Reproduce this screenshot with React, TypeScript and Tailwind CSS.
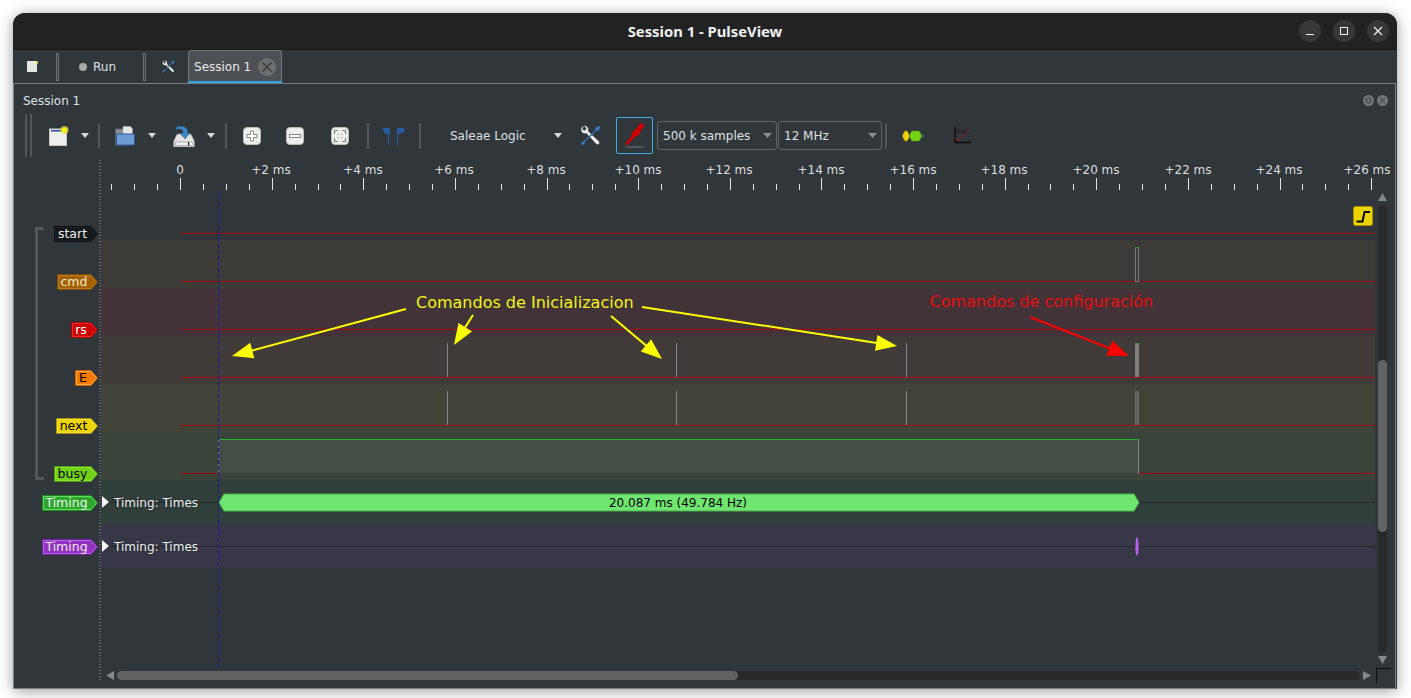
import { FC } from "react";

const TICK_X0 = 180.1;
const TICK_STEP = 22.905;

const ticks = Array.from({ length: 56 }, (_, i) => i - 3);

const rulerLabels = [
  { t: "0", x: 180 },
  { t: "+2 ms", x: 271 },
  { t: "+4 ms", x: 363 },
  { t: "+6 ms", x: 454 },
  { t: "+8 ms", x: 546 },
  { t: "+10 ms", x: 638 },
  { t: "+12 ms", x: 729 },
  { t: "+14 ms", x: 821 },
  { t: "+16 ms", x: 913 },
  { t: "+18 ms", x: 1004 },
  { t: "+20 ms", x: 1096 },
  { t: "+22 ms", x: 1188 },
  { t: "+24 ms", x: 1279 },
  { t: "+26 ms", x: 1367 },
];

type TagProps = {
  label: string;
  width: number;
  boxClass: string;
  fill: string;
  outer: string;
  inner: string;
  textClass: string;
};

const Tag: FC<TagProps> = ({ label, width, boxClass, fill, outer, inner, textClass }) => {
  const h = 16;
  const shape = (o: number) =>
    `${o},${o} ${width - 7},${o} ${width - o},${h / 2} ${width - 7},${h - o} ${o},${h - o}`;
  return (
    <div className={`relative h-[16px] flex items-center justify-center pr-[7px] pt-[1px] text-[12.5px] leading-none ${boxClass} ${textClass}`}>
      <svg className="absolute left-0 top-0" width={width} height={h}>
        <polygon points={shape(0.5)} fill={fill} stroke={outer} />
        <polygon points={shape(1.5)} fill={fill} stroke={inner} />
      </svg>
      <span className="relative">{label}</span>
    </div>
  );
};

const DropArrow = ({ className }: { className: string }) => (
  <svg className={className} width="8" height="5">
    <polygon points="0,0 8,0 4,5" fill="#d5d7d8" />
  </svg>
);

const Sep = ({ className }: { className: string }) => (
  <div className={`w-[2px] h-[26px] bg-[#54575a] rounded-sm ${className}`} />
);

const ToolsIcon = ({ size, className }: { size: number; className?: string }) => (
  <svg className={className} width={size} height={size} viewBox="0 0 20 20">
    <path d="M3 1 C0.8 2.8 0.6 5.2 2 7 C3.2 8.2 4.8 8.3 6 7.6 L15.6 18 C17 19.4 19.4 17 18 15.6 L7.6 6 C8.2 4.4 7.9 2.6 6.6 1.6 C5.8 0.9 4.8 0.6 4 0.7 L6.2 3.4 L4.6 5.4 L2.4 4.6 Z" fill="#f2f3f3" stroke="#8f959a" strokeWidth="0.4" />
    <path d="M17.5 0.8 L19.4 2.6 L17 5.6 L15.6 5.4 L5.2 15.8 L4.2 18.2 L1.8 19.4 L0.8 18.4 L2 16 L4.4 15 L14.8 4.6 L14.6 3.2 Z" fill="#3f7fc0" stroke="#1f4f86" strokeWidth="0.4" />
  </svg>
);

const ZoomBtn = ({ className, children }: { className: string; children: React.ReactNode }) => (
  <svg className={className} width="18" height="18" viewBox="0 0 18 18">
    <rect x="0.5" y="0.5" width="17" height="17" rx="3.5" fill="#eeeeec" stroke="#babdb6" />
    {children}
  </svg>
);

const Arrow = ({ x1, y1, x2, y2, color }: { x1: number; y1: number; x2: number; y2: number; color: string }) => {
  const len = Math.hypot(x2 - x1, y2 - y1);
  const ux = (x2 - x1) / len;
  const uy = (y2 - y1) / len;
  const bx = x2 - ux * 21;
  const by = y2 - uy * 21;
  const nx = -uy * 8;
  const ny = ux * 8;
  return (
    <g>
      <line x1={x1} y1={y1} x2={bx + ux * 4} y2={by + uy * 4} stroke={color} strokeWidth="2" />
      <polygon points={`${x2},${y2} ${bx + nx},${by + ny} ${bx - nx},${by - ny}`} fill={color} />
    </g>
  );
};

const Pulse = ({ x }: { x: number }) => (
  <g stroke="#85878a" strokeWidth="1">
    <line x1={x} y1="343" x2={x} y2="377" />
    <line x1={x} y1="391" x2={x} y2="425" />
  </g>
);

const Waveforms = () => (
  <svg className="absolute left-0 top-0" width="1361" height="477" viewBox="14 191 1361 477">
    {[233.5, 281.5, 329.5, 377.5, 425.5].map((y) => (
      <line key={y} x1="180" y1={y} x2="1375" y2={y} stroke="#a80808" strokeWidth="1" />
    ))}
    <line x1="180" y1="473.5" x2="218" y2="473.5" stroke="#a80808" />
    <line x1="1139" y1="473.5" x2="1375" y2="473.5" stroke="#a80808" />

    <Pulse x={447.5} />
    <Pulse x={676.5} />
    <Pulse x={906.5} />

    <rect x="1135.5" y="247.5" width="3" height="34" fill="#3c3b37" stroke="#77797a" />
    <line x1="1135" y1="247.5" x2="1139" y2="247.5" stroke="#1fa01f" />
    <rect x="1135" y="343" width="4" height="34" fill="#7e7f80" />
    <line x1="1135" y1="343.5" x2="1139" y2="343.5" stroke="#2fa02f" />
    <rect x="1135" y="391" width="4" height="34" fill="#6c6e6c" />
    <line x1="1137" y1="391" x2="1137" y2="425" stroke="#53554f" />

    <rect x="218" y="440" width="920" height="33" fill="#454e46" />
    <line x1="218" y1="439.5" x2="1139" y2="439.5" stroke="#22b022" />
    <line x1="1138.5" y1="440" x2="1138.5" y2="474" stroke="#85878a" />
    <line x1="218.5" y1="440" x2="218.5" y2="473" stroke="#77797a" />

    <line x1="108" y1="502.5" x2="1375" y2="502.5" stroke="#23272a" />
    <line x1="108" y1="546.5" x2="1375" y2="546.5" stroke="#23272a" />

    <polygon points="219,502.5 224,494 1134,494 1139,502.5 1134,511 224,511" fill="#6fe66f" stroke="#4fb04f" strokeWidth="1" />
    <text x="678" y="507" textAnchor="middle" fontSize="12" fill="#000">
      20.087 ms (49.784 Hz)
    </text>
    <ellipse cx="1137" cy="546.5" rx="1.6" ry="9.5" fill="#b264e6" />

    <line x1="218.5" y1="190" x2="218.5" y2="667" stroke="#1717a8" strokeWidth="1" strokeDasharray="4 2" />

    <rect x="1353.5" y="206.5" width="19" height="19" rx="2" fill="#edd400" stroke="#a89000" />
    <path d="M1356.5 221.5 H1362.5 L1364.5 212 H1370" fill="none" stroke="#000" strokeWidth="2" />

    <text x="416" y="308" fontSize="16" fill="#f5f516">
      Comandos de Inicializacion
    </text>
    <text x="929.5" y="307" fontSize="16" fill="#ee0b0b">
      Comandos de configuración
    </text>
    <Arrow x1={406} y1={309} x2={232} y2={356} color="#ffff00" />
    <Arrow x1={473} y1={315} x2={454} y2={345} color="#ffff00" />
    <Arrow x1={611} y1={316} x2={662} y2={359} color="#ffff00" />
    <Arrow x1={642} y1={307} x2={897} y2={346} color="#ffff00" />
    <Arrow x1={1030} y1={317} x2={1129} y2={356} color="#ff0000" />
  </svg>
);

const TimingName = () => (
  <>
    <svg className="relative z-10 ml-[1px] shrink-0" width="7" height="12">
      <polygon points="0,0 7,6 0,12" fill="#f4f4f4" />
    </svg>
    <span className="relative z-10 ml-[5px] mt-[1px] text-[12px] text-[#eff0f1] [text-shadow:0_0_2px_#23272a]">Timing: Times</span>
  </>
);

export default function App() {
  return (
    <div className="h-[698px] w-full overflow-hidden bg-white pl-[13px] pt-[13px] font-['DejaVu_Sans',sans-serif]">
      <div className="flex h-[676px] w-[1384px] flex-col overflow-hidden rounded-t-[12px] bg-[#31363b] shadow-[0_2px_14px_rgba(0,0,0,0.4)]">
        {/* title bar */}
        <div className="flex h-[37px] shrink-0 items-center border-b border-[#191919] bg-[#222222]">
          <div className="flex-1 pl-[98px] text-center font-['Noto_Sans',sans-serif] text-[14.8px] font-bold text-[#f0f0f0]">
            Session 1 - PulseView
          </div>
          <div className="flex gap-[12px] pr-[8px]">
            <button className="flex h-[22px] w-[22px] items-center justify-center rounded-full bg-[#373737]">
              <svg width="10" height="10">
                <line x1="1" y1="8.5" x2="9" y2="8.5" stroke="#f0f0f0" strokeWidth="1" />
              </svg>
            </button>
            <button className="flex h-[22px] w-[22px] items-center justify-center rounded-full bg-[#373737]">
              <svg width="10" height="10">
                <rect x="1.5" y="1.5" width="7" height="7" fill="none" stroke="#f0f0f0" strokeWidth="1" />
              </svg>
            </button>
            <button className="flex h-[22px] w-[22px] items-center justify-center rounded-full bg-[#373737]">
              <svg width="10" height="10">
                <path d="M1 1 L9 9 M9 1 L1 9" stroke="#f0f0f0" strokeWidth="1.2" />
              </svg>
            </button>
          </div>
        </div>

        {/* main toolbar + tab */}
        <div className="flex h-[33px] shrink-0 items-center text-[12px] text-[#dfe1e2]">
          <svg className="ml-[14px]" width="11" height="11">
            <rect width="10" height="11" fill="#e6e6e3" />
            <circle cx="9.5" cy="1.5" r="1.5" fill="#f3e97a" />
          </svg>
          <div className="ml-[18px] h-[28px] w-[3px] border border-[#6e7173] bg-[#3a3f43]" />
          <div className="ml-[20px] h-[8px] w-[8px] rounded-full bg-[#a8aaa6]" />
          <span className="ml-[6px]">Run</span>
          <div className="ml-[27px] h-[28px] w-[3px] border border-[#6e7173] bg-[#3a3f43]" />
          <ToolsIcon size={13} className="ml-[16px]" />
          <div className="ml-[13px] flex h-[33px] w-[94px] items-center rounded-t-[3px] border border-b-0 border-[#73767a] bg-[#4d5054] pl-[5px]">
            <span className="text-[#e8e9ea]">Session 1</span>
            <svg className="ml-[7px]" width="18" height="18">
              <circle cx="9" cy="9" r="9" fill="#6d6d6d" />
              <path d="M4.5 4.5 L13.5 13.5 M13.5 4.5 L4.5 13.5" stroke="#34383b" strokeWidth="1.4" />
            </svg>
          </div>
        </div>

        {/* session panel */}
        <div className="relative mr-[1px] flex min-h-0 flex-1 flex-col border border-[#7c7f82]">
          <div className="absolute left-[174px] top-[-3px] h-[2px] w-[94px] bg-[#2f9fe0]" />
          <div className="flex h-[29px] shrink-0 items-center justify-between pl-[9px] pr-[7px] pt-[4px] text-[12px] text-[#dfe1e2]">
            <span>Session 1</span>
            <div className="flex gap-[3px]">
              <svg width="11" height="11">
                <circle cx="5.5" cy="5.5" r="5.5" fill="#72767a" />
                <circle cx="5.5" cy="5.5" r="2.5" fill="none" stroke="#33383b" />
              </svg>
              <svg width="11" height="11">
                <circle cx="5.5" cy="5.5" r="5.5" fill="#72767a" />
                <path d="M3 3 L8 8 M8 3 L3 8" stroke="#33383b" />
              </svg>
            </div>
          </div>

          {/* session toolbar */}
          <div className="mb-[2px] flex h-[45px] shrink-0 items-center text-[12px] text-[#dfe1e2]">
            <div className="ml-[11px] h-[43px] w-[2px] bg-[#54575a]" />
            <div className="ml-[3px] h-[43px] w-[2px] bg-[#54575a]" />
            <svg className="ml-[17px]" width="20" height="20" viewBox="0 0 20 20">
              <rect x="0.5" y="3" width="17" height="16.5" fill="#eeeeec" stroke="#c5c7c2" />
              <rect x="2" y="4" width="11" height="1.6" fill="#2a5a9f" />
              <circle cx="15.5" cy="4" r="4" fill="#e6e43a" opacity="0.75" />
              <circle cx="15.5" cy="4" r="2.2" fill="#fbf700" />
            </svg>
            <DropArrow className="ml-[12px]" />
            <Sep className="ml-[9px]" />
            <svg className="ml-[15px]" width="20" height="20" viewBox="0 0 20 20">
              <rect x="0.5" y="3" width="12" height="16" fill="#8a8e92" stroke="#5d6164" />
              <path d="M8 0.5 H15.5 L17.5 3 V8 H8 Z" fill="#e8e8e6" stroke="#aaa" strokeWidth="0.5" />
              <path d="M1.5 8 H19.5 V19 H1.5 Z" fill="#6d9bd2" stroke="#2a5a9f" />
            </svg>
            <DropArrow className="ml-[13px]" />
            <svg className="ml-[17px]" width="22" height="22" viewBox="0 0 22 22">
              <path d="M4 9 H18 L21.5 16 V22 H0.5 V16 Z" fill="#e4e5e2" stroke="#6a6d6a" strokeWidth="0.6" />
              <rect x="2.5" y="17" width="17" height="3.4" fill="#f3f3f1" stroke="#555" strokeWidth="0.4" />
              <rect x="15" y="17" width="1.2" height="3.4" fill="#111" />
              <path d="M3 2.5 C7.5 0 13.5 1 14.5 5.5 V8 H17 L12 14 L7 8 H10 V6.5 C10 4.5 7 3.5 3 4.5 Z" fill="#3f86c4" stroke="#24588f" strokeWidth="0.5" />
            </svg>
            <DropArrow className="ml-[12px]" />
            <Sep className="ml-[10px]" />
            <ZoomBtn className="ml-[16px]">
              <path d="M7.5 4 H10.5 V7.5 H14 V10.5 H10.5 V14 H7.5 V10.5 H4 V7.5 H7.5 Z" fill="#fff" stroke="#858585" />
            </ZoomBtn>
            <ZoomBtn className="ml-[25px]">
              <rect x="3.5" y="7.5" width="11" height="3" fill="#fff" stroke="#858585" />
            </ZoomBtn>
            <ZoomBtn className="ml-[27px]">
              <path d="M3.5 7 V3.5 H7 M11 3.5 H14.5 V7 M14.5 11 V14.5 H11 M7 14.5 H3.5 V11" fill="none" stroke="#858585" strokeWidth="1.2" />
              <path d="M7 7 H8 M10 7 H11 V8 M11 10 V11 H10 M8 11 H7 V10 M7 8 V7" fill="none" stroke="#a0a0a0" />
            </ZoomBtn>
            <Sep className="ml-[18px]" />
            <svg className="ml-[13px]" width="23" height="20" viewBox="0 0 23 20">
              <path d="M0 2 H8 V8 L7 9 V19 H6 V8 H3 Z" fill="#2a5a9f" />
              <path d="M15 19 V2 H22.5 V6 L17 8 H16 V19 Z" fill="#2a5a9f" />
            </svg>
            <Sep className="ml-[14px]" />
            <span className="ml-[29px] w-[104px]">Saleae Logic</span>
            <DropArrow className="" />
            <ToolsIcon size={21} className="ml-[18px]" />
            <button className="ml-[15px] flex h-[37px] w-[37px] items-center justify-center rounded-[2px] border border-[#3daee9] bg-[#31363b]">
              <svg width="22" height="26" viewBox="0 0 22 26">
                <ellipse cx="11" cy="24" rx="10" ry="1" fill="#55595c" />
                <path d="M1 21 L8 12.5 L7 10.5 L13 5 L15.5 1 L19 0.5 L20 3.5 L17.5 6.5 L14.5 12.5 L11.5 13.5 L2.5 22.5 Z" fill="#cc0000" />
              </svg>
            </button>
            <div className="ml-[4px] flex h-[29px] w-[120px] items-center justify-between rounded-[3px] border border-[#62666a] pl-[5px] pr-[4px]">
              <span>500 k samples</span>
              <svg width="9" height="5">
                <polygon points="0,0 9,0 4.5,5" fill="#8b8e90" />
              </svg>
            </div>
            <div className="ml-[1px] flex h-[29px] w-[104px] items-center justify-between rounded-[3px] border border-[#62666a] pl-[5px] pr-[4px]">
              <span>12 MHz</span>
              <svg width="9" height="5">
                <polygon points="0,0 9,0 4.5,5" fill="#8b8e90" />
              </svg>
            </div>
            <Sep className="ml-[3px]" />
            <svg className="ml-[15px]" width="22" height="12" viewBox="0 0 22 12">
              <line x1="0" y1="6" x2="22" y2="6" stroke="#9a9d90" />
              <polygon points="1,4.5 3,1 5,1 7,4.5 7,7.5 5,11 3,11 1,7.5" fill="#edd400" stroke="#c4a000" strokeWidth="0.5" />
              <polygon points="8,4 10,1 17,1 19,4 19,8 17,11 10,11 8,8" fill="#73d216" stroke="#4e9a06" strokeWidth="0.5" />
            </svg>
            <svg className="ml-[29px]" width="18" height="18" viewBox="0 0 18 18">
              <path d="M2 0 V15.5 H18" fill="none" stroke="#0a0a0a" strokeWidth="1.4" />
              <path d="M1 11 C5 14 6 14 9 10 C11 7 14 8 16 2" fill="none" stroke="#a01818" strokeWidth="1" />
              <text x="3.5" y="6" fontSize="6" fill="#111">f(x)</text>
            </svg>
          </div>

          {/* trace view */}
          <div className="relative flex min-h-0 flex-1 flex-col">
            <div className="absolute left-[85px] top-0 h-[522px] w-[2px] bg-[repeating-linear-gradient(to_bottom,#63676a_0_1px,transparent_1px_3px)]" />

            <svg className="shrink-0" width="1381" height="31" viewBox="14 160 1381 31">
              {ticks.map((i) => {
                const x = Math.round(TICK_X0 + i * TICK_STEP) + 0.5;
                const major = ((i % 4) + 4) % 4 === 0;
                return <line key={i} x1={x} y1={major ? 178 : 184} x2={x} y2="190" stroke="#e4e5e6" strokeWidth="1" />;
              })}
              {rulerLabels.map((l) => (
                <text key={l.t} x={l.x} y="174" textAnchor="middle" fontSize="12" fill="#dcdedf">
                  {l.t}
                </text>
              ))}
            </svg>

            <div className="flex h-[477px] shrink-0">
              <div className="relative w-[1361px] shrink-0">
                {/* channel rows */}
                <div className="flex h-[49px]">
                  <div className="flex w-[84px] shrink-0 items-end justify-end">
                    <div className="mb-[-2px]">
                      <Tag label="start" width={44} boxClass="w-[44px]" fill="#16191a" outer="#0c0e0f" inner="#1e2224" textClass="text-[#eeeeec]" />
                    </div>
                  </div>
                </div>
                <div className="flex h-[48px]">
                  <div className="flex w-[84px] shrink-0 items-end justify-end">
                    <div className="mb-[-2px]">
                      <Tag label="cmd" width={41} boxClass="w-[41px]" fill="#a66200" outer="#7f4a00" inner="#bd7c1e" textClass="text-[#f2e6d0]" />
                    </div>
                  </div>
                  <div className="ml-[3px] flex-1 bg-[#3c3b37]" />
                </div>
                <div className="flex h-[48px]">
                  <div className="flex w-[84px] shrink-0 items-end justify-end">
                    <div className="mb-[-2px]">
                      <Tag label="rs" width={27} boxClass="w-[27px]" fill="#cc0000" outer="#a40000" inner="#ef2929" textClass="text-[#ffffff]" />
                    </div>
                  </div>
                  <div className="ml-[3px] flex-1 bg-[#423339]" />
                </div>
                <div className="flex h-[48px]">
                  <div className="flex w-[84px] shrink-0 items-end justify-end">
                    <div className="mb-[-2px]">
                      <Tag label="E" width={23} boxClass="w-[23px]" fill="#f57900" outer="#ce5c00" inner="#fcaf3e" textClass="text-[#000000]" />
                    </div>
                  </div>
                  <div className="ml-[3px] flex-1 bg-[#403b38]" />
                </div>
                <div className="flex h-[48px]">
                  <div className="flex w-[84px] shrink-0 items-end justify-end">
                    <div className="mb-[-2px]">
                      <Tag label="next" width={42} boxClass="w-[42px]" fill="#edd400" outer="#a89000" inner="#f5e03c" textClass="text-[#000000]" />
                    </div>
                  </div>
                  <div className="ml-[3px] flex-1 bg-[#42443a]" />
                </div>
                <div className="flex h-[48px]">
                  <div className="flex w-[84px] shrink-0 items-end justify-end">
                    <div className="mb-[-2px]">
                      <Tag label="busy" width={44} boxClass="w-[44px]" fill="#73d216" outer="#4e9a06" inner="#8ae234" textClass="text-[#000000]" />
                    </div>
                  </div>
                  <div className="ml-[3px] flex-1 bg-[#3a443b]" />
                </div>
                <div className="flex h-[44px] items-center">
                  <div className="mt-[1px] flex w-[84px] shrink-0 justify-end">
                    <Tag label="Timing" width={56} boxClass="w-[56px]" fill="#2fa52f" outer="#1c8a1c" inner="#5fe05f" textClass="text-[#e8f5e8]" />
                  </div>
                  <div className="ml-[3px] flex h-full flex-1 items-center bg-[#313f3b]">
                    <TimingName />
                  </div>
                </div>
                <div className="flex h-[44px] items-center">
                  <div className="mt-[1px] flex w-[84px] shrink-0 justify-end">
                    <Tag label="Timing" width={56} boxClass="w-[56px]" fill="#8f33bf" outer="#6f1f9f" inner="#bb62ee" textClass="text-[#f0e6f5]" />
                  </div>
                  <div className="ml-[3px] flex h-full flex-1 items-center bg-[#373747]">
                    <TimingName />
                  </div>
                </div>

                <Waveforms />

                {/* channel group bracket */}
                <div className="absolute left-[21px] top-[36px] h-[253px] w-[9px] rounded-[2px] border-y-[3px] border-l-[3px] border-[#54575a]" />
              </div>

              {/* vertical scrollbar */}
              <div className="ml-[3px] flex w-[9px] flex-col items-center pt-[2px]">
                <svg className="shrink-0" width="9" height="8">
                  <polygon points="4.5,0 9,8 0,8" fill="#85888a" />
                </svg>
                <div className="mt-[4px] flex h-[448px] w-[9px] shrink-0 flex-col rounded-full bg-[#292929] pt-[155px]">
                  <div className="h-[172px] rounded-full bg-[#626262]" />
                </div>
                <svg className="mt-[3px] shrink-0" width="9" height="8">
                  <polygon points="0,0 9,0 4.5,8" fill="#85888a" />
                </svg>
              </div>
            </div>

            {/* horizontal scrollbar */}
            <div className="flex h-[20px] shrink-0 items-start">
              <svg className="ml-[92px] mt-[3px] shrink-0" width="8" height="9">
                <polygon points="0,4.5 8,0 8,9" fill="#85888a" />
              </svg>
              <div className="ml-[3px] mt-[3px] h-[9px] w-[1243px] shrink-0 rounded-full bg-[#292929]">
                <div className="h-[9px] w-[621px] rounded-full bg-[#626262]" />
              </div>
              <svg className="ml-[3px] mt-[3px] shrink-0" width="8" height="9">
                <polygon points="8,4.5 0,0 0,9" fill="#85888a" />
              </svg>
              <div className="ml-[5px] mt-0 h-[15px] w-[15px] shrink-0 border-l border-t border-[#0f0f0f]" />
            </div>
          </div>
        </div>
      </div>
    </div>
  );
}
